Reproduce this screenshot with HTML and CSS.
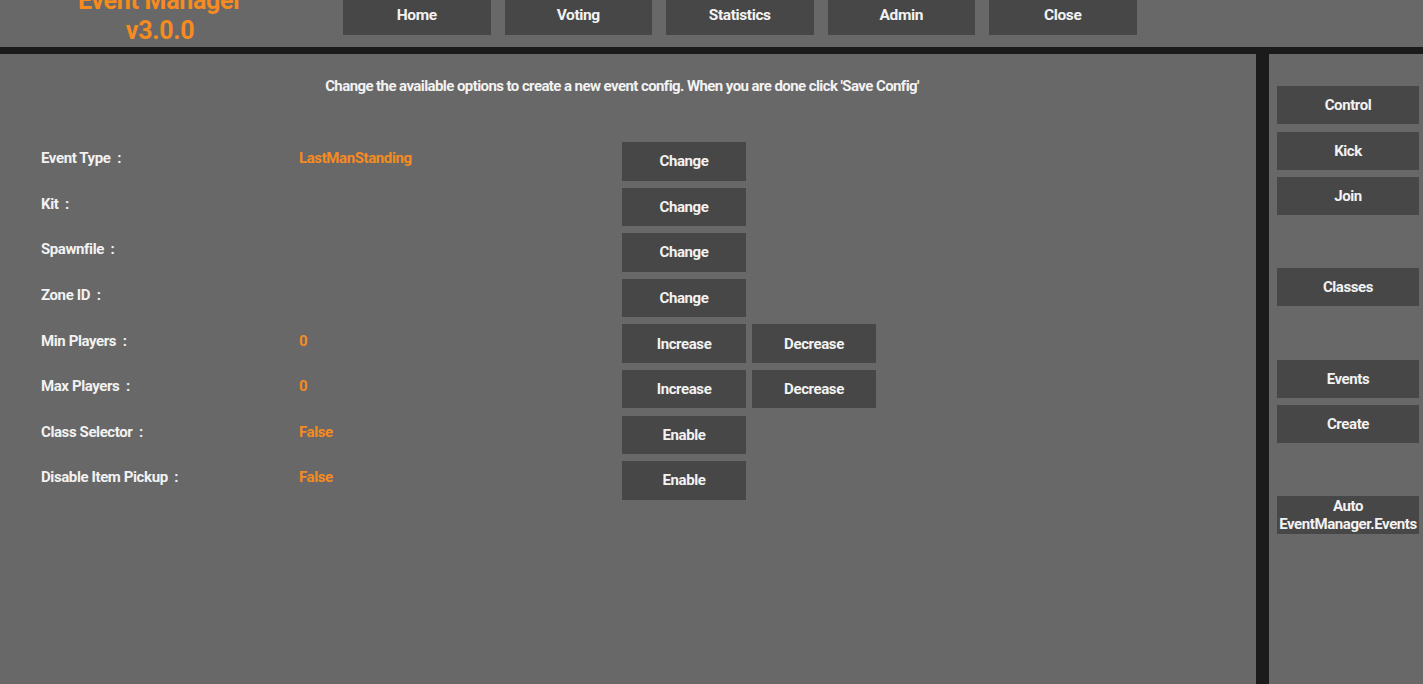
FILE: index.html
```html
<!DOCTYPE html>
<html lang="en">
  <head>
    <meta charset="UTF-8" />
    <meta name="viewport" content="width=device-width, initial-scale=1.0" />
    <title>Event Manager</title>
    <link rel="stylesheet" href="styles.css">
  </head>
  <body>
    <!-- top bar -->
    <header class="topbar">
      <div class="title">
        <span>Event Manager</span>
        <span>v3.0.0</span>
      </div>
      <nav class="nav">
        <a href="#" class="btn nav-btn">Home</a>
        <a href="#" class="btn nav-btn">Voting</a>
        <a href="#" class="btn nav-btn">Statistics</a>
        <a href="#" class="btn nav-btn">Admin</a>
        <a href="#" class="btn nav-btn">Close</a>
      </nav>
    </header>

    <div class="divider-h"></div>

    <div class="main">
      <!-- config panel -->
      <section class="panel">
        <p class="intro">Change the available options to create a new event config. When you are done click 'Save Config'</p>

        <div class="rows">
          <div class="row">
            <span class="label">Event Type&nbsp; :</span>
            <span class="value">LastManStanding</span>
            <div class="actions"><a href="#" class="btn">Change</a></div>
          </div>
          <div class="row">
            <span class="label">Kit&nbsp; :</span>
            <span class="value"></span>
            <div class="actions"><a href="#" class="btn">Change</a></div>
          </div>
          <div class="row">
            <span class="label">Spawnfile&nbsp; :</span>
            <span class="value"></span>
            <div class="actions"><a href="#" class="btn">Change</a></div>
          </div>
          <div class="row">
            <span class="label">Zone ID&nbsp; :</span>
            <span class="value"></span>
            <div class="actions"><a href="#" class="btn">Change</a></div>
          </div>
          <div class="row">
            <span class="label">Min Players&nbsp; :</span>
            <span class="value">0</span>
            <div class="actions"><a href="#" class="btn">Increase</a><a href="#" class="btn">Decrease</a></div>
          </div>
          <div class="row">
            <span class="label">Max Players&nbsp; :</span>
            <span class="value">0</span>
            <div class="actions"><a href="#" class="btn">Increase</a><a href="#" class="btn">Decrease</a></div>
          </div>
          <div class="row">
            <span class="label">Class Selector&nbsp; :</span>
            <span class="value">False</span>
            <div class="actions"><a href="#" class="btn">Enable</a></div>
          </div>
          <div class="row">
            <span class="label">Disable Item Pickup&nbsp; :</span>
            <span class="value">False</span>
            <div class="actions"><a href="#" class="btn">Enable</a></div>
          </div>
        </div>
      </section>

      <div class="divider-v"></div>

      <!-- side menu -->
      <aside class="side">
        <a href="#" class="btn">Control</a>
        <a href="#" class="btn">Kick</a>
        <a href="#" class="btn">Join</a>
        <span></span>
        <a href="#" class="btn">Classes</a>
        <span></span>
        <a href="#" class="btn">Events</a>
        <a href="#" class="btn">Create</a>
        <span></span>
        <a href="#" class="btn two-line">Auto<br>EventManager.Events</a>
      </aside>
    </div>
  </body>
</html>
```

FILE: styles.css
```css
* {
  margin: 0;
  padding: 0;
  box-sizing: border-box;
}
html,
body {
  font-family: "Roboto", "Liberation Sans", sans-serif;
  font-size: 15px;
  font-weight: bold;
  letter-spacing: -0.4px;
  color: #f2f2f2;
  background-color: #686868;
  height: 100%;
  overflow: hidden;
}
a {
  text-decoration: none;
  color: #f2f2f2;
}
.btn {
  display: flex;
  justify-content: center;
  align-items: center;
  background-color: #474747;
  color: #f2f2f2;
  text-align: center;
}

/* top bar */
.topbar {
  display: flex;
  height: 47px;
  background-color: #686868;
}
.title {
  width: 320px;
  display: flex;
  flex-direction: column;
  align-items: center;
  margin-top: -14px;
  color: #f68b1f;
  font-size: 25px;
  line-height: 30px;
  letter-spacing: -0.3px;
}
.nav {
  display: flex;
  gap: 14px;
  margin-left: 23px;
}
.nav-btn {
  width: 147.5px;
  height: 35px;
  padding-bottom: 6px;
  font-size: 15.5px;
}

.divider-h {
  height: 7px;
  background-color: #1b1b1b;
}

/* main area */
.main {
  display: flex;
  height: 630px;
}
.panel {
  width: 1256px;
  padding: 22px 0 0 41px;
}
.intro {
  width: 1162px;
  text-align: center;
  line-height: 20px;
  letter-spacing: -0.58px;
}
.rows {
  display: grid;
  grid-auto-rows: 38.5px;
  row-gap: 7.1px;
  margin-top: 46px;
}
.row {
  display: grid;
  grid-template-columns: 258px 323px auto;
  align-items: center;
}
.label,
.value {
  padding-bottom: 6px;
}
.value {
  color: #f68b1f;
}
.actions {
  display: flex;
  gap: 6px;
  height: 100%;
}
.actions .btn {
  width: 124px;
  height: 100%;
}

.divider-v {
  width: 13px;
  background-color: #1b1b1b;
}

/* side menu */
.side {
  width: 154px;
  padding: 32px 0 0 8px;
  display: grid;
  grid-template-columns: 142px;
  grid-auto-rows: 38px;
  row-gap: 7.6px;
  align-content: start;
}
.two-line {
  line-height: 18px;
}
```
